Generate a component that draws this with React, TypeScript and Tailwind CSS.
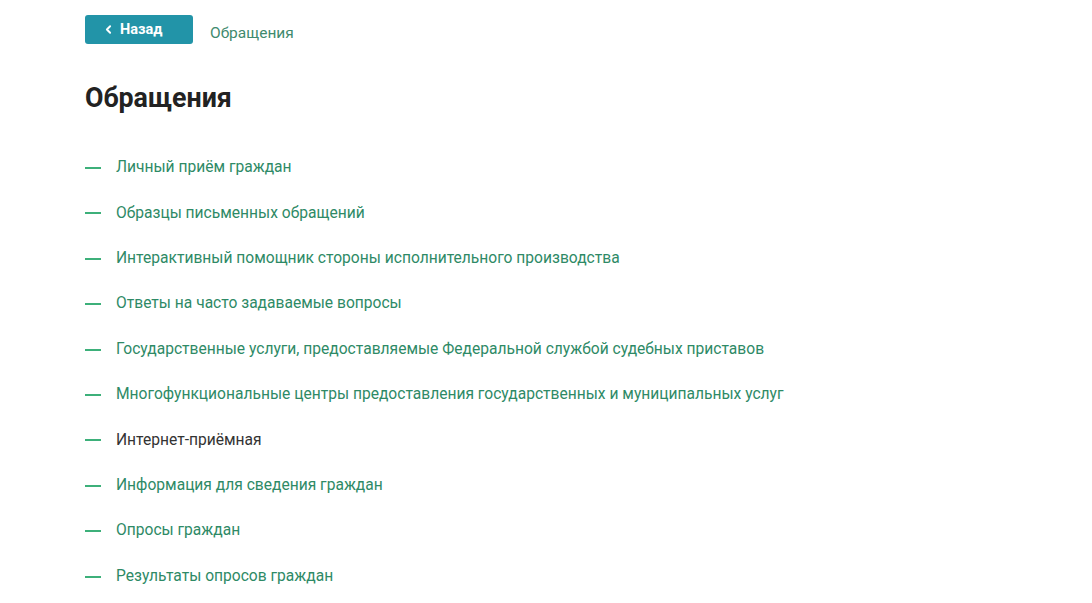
import { ChevronLeft } from 'lucide-react'

const ITEMS = [
  { label: 'Личный приём граждан' },
  { label: 'Образцы письменных обращений' },
  { label: 'Интерактивный помощник стороны исполнительного производства' },
  { label: 'Ответы на часто задаваемые вопросы' },
  { label: 'Государственные услуги, предоставляемые Федеральной службой судебных приставов' },
  { label: 'Многофункциональные центры предоставления государственных и муниципальных услуг' },
  { label: 'Интернет-приёмная', active: true },
  { label: 'Информация для сведения граждан' },
  { label: 'Опросы граждан' },
  { label: 'Результаты опросов граждан' },
]

export default function App() {
  return (
    <div className="min-h-screen bg-white px-[85px] pt-[15px] font-['Roboto',sans-serif]">
      <div className="flex h-[29px] items-start gap-[17px]">
        <button className="flex h-[29px] w-[108px] items-center gap-[5px] rounded-[3px] bg-[#2294a8] pl-[17px] text-[14.5px] font-bold text-white">
          <ChevronLeft className="h-[13px] w-[13px]" strokeWidth={3.5} />
          Назад
        </button>
        <a className="mt-[8px] text-[15.5px] leading-[20px] text-[#3f8a6e]">Обращения</a>
      </div>

      <h1 className="mt-[38px] text-[26.8px] font-bold leading-[32px] text-[#222]">Обращения</h1>

      <ul className="mt-[44px] flex flex-col gap-[25.4px]">
        {ITEMS.map((it) => (
          <li key={it.label} className="flex h-[20px] items-center">
            <span className="h-[2px] w-[16px] bg-[#3db07a]" />
            <span
              className={
                'ml-[15px] text-[15.6px] ' + (it.active ? 'text-[#333]' : 'text-[#2e8a66]')
              }
            >
              {it.label}
            </span>
          </li>
        ))}
      </ul>
    </div>
  )
}
